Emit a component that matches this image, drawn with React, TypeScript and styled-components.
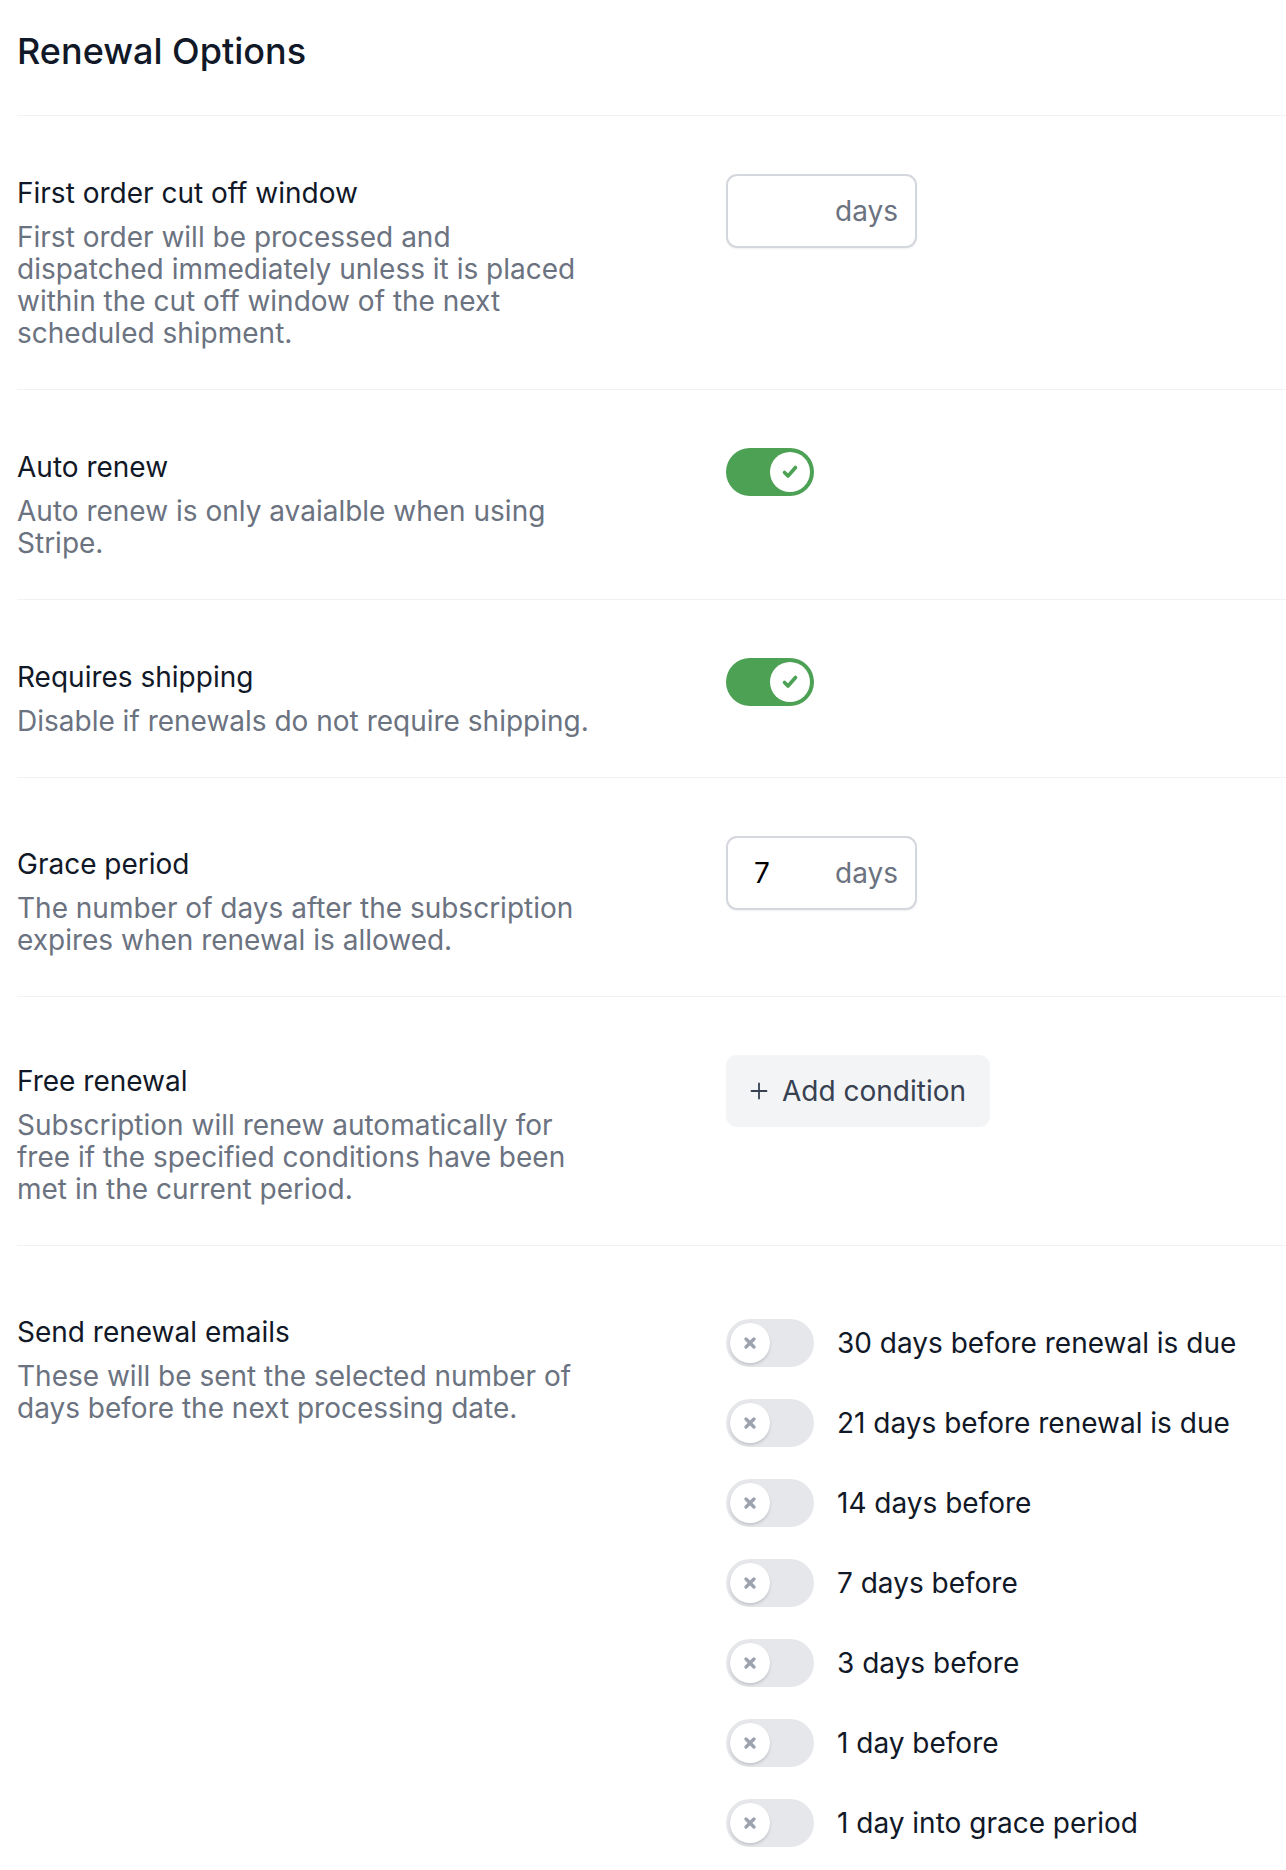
import React from 'react'
import styled, { createGlobalStyle } from 'styled-components'

const GlobalStyle = createGlobalStyle`
    body {
        margin: 0;
        background: #ffffff;
        font-family: Inter, 'Noto Sans', sans-serif;
        color: #111827;
    }
`

const Page = styled.div`
    padding-left: 17px;
    overflow: hidden;
`

const Title = styled.h2`
    margin: 0;
    padding: 31px 0 44px;
    font-size: 36px;
    line-height: 40px;
    font-weight: 500;
    color: #111827;
    border-bottom: 1px solid #f1f2f4;
`

const Row = styled.div<{ $last?: boolean }>`
    display: grid;
    grid-template-columns: 585px 1fr;
    column-gap: 124px;
    padding: 58px 0 ${(p) => (p.$last ? '0' : '40px')};
    border-bottom: ${(p) => (p.$last ? 'none' : '1px solid #f1f2f4')};
`

const TextBlock = styled.div<{ $shift: number }>`
    margin-top: ${(p) => p.$shift}px;
`

const Label = styled.div`
    font-size: 28px;
    line-height: 32px;
    color: #111827;
`

const Description = styled.p`
    margin: 12px 0 0;
    font-size: 28px;
    line-height: 32px;
    color: #6b7280;
`

const Control = styled.div<{ $offset?: number }>`
    display: flex;
    flex-direction: column;
    align-items: flex-start;
    gap: 32px;
    margin-top: ${(p) => p.$offset || 0}px;
`

const InputBox = styled.div`
    box-sizing: border-box;
    width: 191px;
    height: 74px;
    display: flex;
    align-items: center;
    justify-content: space-between;
    padding: 0 17px 0 26px;
    border: 2px solid #d4d7dd;
    border-radius: 11px;
    box-shadow: 0 1px 2px rgba(0, 0, 0, 0.06);
    font-size: 28px;
    background: #fff;
`

const InputValue = styled.span`
    color: #000;
`

const Unit = styled.span`
    color: #6b7280;
`

const Track = styled.div<{ $on: boolean }>`
    box-sizing: border-box;
    flex-shrink: 0;
    width: 88px;
    height: 48px;
    border-radius: 24px;
    padding: 4px;
    display: flex;
    justify-content: ${(p) => (p.$on ? 'flex-end' : 'flex-start')};
    background: ${(p) => (p.$on ? '#4ca154' : '#e5e7eb')};
`

const Knob = styled.div<{ $on: boolean }>`
    width: 40px;
    height: 40px;
    border-radius: 50%;
    background: #fff;
    display: flex;
    align-items: center;
    justify-content: center;
    box-shadow: ${(p) => (p.$on ? 'none' : '0 2px 3px rgba(0, 0, 0, 0.15)')};
`

const AddButton = styled.button`
    box-sizing: border-box;
    height: 72px;
    width: 264px;
    display: flex;
    align-items: center;
    gap: 13px;
    padding: 0 0 0 23px;
    border: none;
    border-radius: 11px;
    background: #f3f4f6;
    color: #374151;
    font-family: inherit;
    font-size: 28px;
`

const EmailOption = styled.div`
    display: flex;
    align-items: center;
    gap: 23px;
`

const EmailText = styled.span`
    font-size: 28px;
    line-height: 32px;
    color: #111827;
    white-space: nowrap;
`

const Toggle = ({ on }: { on: boolean }) => (
    <Track $on={on}>
        <Knob $on={on}>
            {on ? (
                <svg width="20" height="20" viewBox="0 0 20 20">
                    <path d="M4.5 10.5 L8 14 L15.5 5.5" fill="none" stroke="#4ca154" strokeWidth="3.6" strokeLinecap="round" strokeLinejoin="round" />
                </svg>
            ) : (
                <svg width="16" height="16" viewBox="0 0 16 16">
                    <path d="M4 4 L12 12 M12 4 L4 12" stroke="#9ca3af" strokeWidth="3.4" strokeLinecap="round" />
                </svg>
            )}
        </Knob>
    </Track>
)

const emailOptions = [
    '30 days before renewal is due',
    '21 days before renewal is due',
    '14 days before',
    '7 days before',
    '3 days before',
    '1 day before',
    '1 day into grace period',
]

const App = () => {
    return (
        <Page>
            <GlobalStyle />
            <Title>Renewal Options</Title>

            <Row>
                <TextBlock $shift={3}>
                    <Label>First order cut off window</Label>
                    <Description>
                        First order will be processed and dispatched immediately unless it is placed within the cut off window of the next scheduled shipment.
                    </Description>
                </TextBlock>
                <Control>
                    <InputBox>
                        <InputValue />
                        <Unit>days</Unit>
                    </InputBox>
                </Control>
            </Row>

            <Row>
                <TextBlock $shift={3}>
                    <Label>Auto renew</Label>
                    <Description>Auto renew is only avaialble when using Stripe.</Description>
                </TextBlock>
                <Control>
                    <Toggle on />
                </Control>
            </Row>

            <Row>
                <TextBlock $shift={3}>
                    <Label>Requires shipping</Label>
                    <Description>Disable if renewals do not require shipping.</Description>
                </TextBlock>
                <Control>
                    <Toggle on />
                </Control>
            </Row>

            <Row>
                <TextBlock $shift={12}>
                    <Label>Grace period</Label>
                    <Description>The number of days after the subscription expires when renewal is allowed.</Description>
                </TextBlock>
                <Control>
                    <InputBox>
                        <InputValue>7</InputValue>
                        <Unit>days</Unit>
                    </InputBox>
                </Control>
            </Row>

            <Row>
                <TextBlock $shift={10}>
                    <Label>Free renewal</Label>
                    <Description>
                        Subscription will renew automatically for free if the specified conditions have been met in the current period.
                    </Description>
                </TextBlock>
                <Control>
                    <AddButton>
                        <svg width="20" height="20" viewBox="0 0 20 20">
                            <path d="M10 2.5 V17.5 M2.5 10 H17.5" stroke="#374151" strokeWidth="1.8" strokeLinecap="round" />
                        </svg>
                        Add condition
                    </AddButton>
                </Control>
            </Row>

            <Row $last>
                <TextBlock $shift={12}>
                    <Label>Send renewal emails</Label>
                    <Description>These will be sent the selected number of days before the next processing date.</Description>
                </TextBlock>
                <Control $offset={15}>
                    {emailOptions.map((text) => (
                        <EmailOption key={text}>
                            <Toggle on={false} />
                            <EmailText>{text}</EmailText>
                        </EmailOption>
                    ))}
                </Control>
            </Row>
        </Page>
    )
}

export default App
